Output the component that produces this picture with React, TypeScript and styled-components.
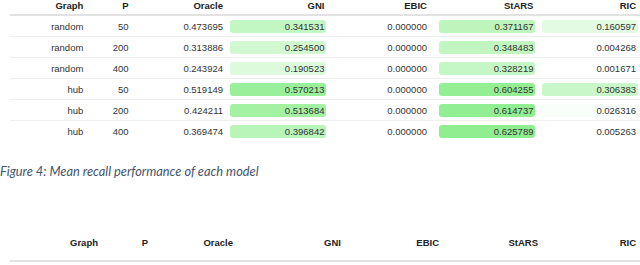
import styled, { createGlobalStyle } from 'styled-components'

const GlobalStyle = createGlobalStyle`
  html, body {
    margin: 0;
    padding: 0;
    background: #ffffff;
  }
  body {
    font-family: "Liberation Sans", Arial, sans-serif;
    overflow: hidden;
  }
`

const Page = styled.div`
  width: 640px;
  height: 265px;
  display: flex;
  flex-direction: column;
`

const Table = styled.table<{ $top: number }>`
  margin: ${(p) => p.$top}px 0 0 10px;
  border-collapse: collapse;
  table-layout: fixed;
  font-size: 9.5px;
  color: #333;
`

const Th = styled.th<{ $w: number; $pb: number }>`
  width: ${(p) => p.$w}px;
  text-align: right;
  font-weight: bold;
  color: #222;
  line-height: 10px;
  padding: 0 4px ${(p) => p.$pb}px 0;
  border-bottom: 2px solid #e2e2e2;
  box-sizing: border-box;
`

const Row = styled.tr`
  border-bottom: 1px solid #eeeeee;

  &:last-child {
    border-bottom: none;
  }
`

const Td = styled.td`
  text-align: right;
  line-height: 13px;
  padding: 4px 4px 3px 0;
  white-space: nowrap;
`

const BarTd = styled.td`
  text-align: right;
  line-height: 13px;
  padding: 4px 2px 3px 0;
`

const Bar = styled.span`
  display: inline-block;
  width: 96px;
  height: 13px;
  border-radius: 3px;
  padding-right: 2px;
  box-sizing: border-box;
  vertical-align: top;
`

const Caption = styled.p`
  margin: 22px 0 0 0;
  font-family: Lato, "Open Sans", sans-serif;
  font-style: italic;
  font-size: 12.8px;
  line-height: 16px;
  color: #44546a;
`

type Result = {
  graph: string
  p: number
  oracle: string
  gni: string
  ebic: string
  stars: string
  ric: string
}

const results: Result[] = [
  { graph: 'random', p: 50, oracle: '0.473695', gni: '0.341531', ebic: '0.000000', stars: '0.371167', ric: '0.160597' },
  { graph: 'random', p: 200, oracle: '0.313886', gni: '0.254500', ebic: '0.000000', stars: '0.348483', ric: '0.004268' },
  { graph: 'random', p: 400, oracle: '0.243924', gni: '0.190523', ebic: '0.000000', stars: '0.328219', ric: '0.001671' },
  { graph: 'hub', p: 50, oracle: '0.519149', gni: '0.570213', ebic: '0.000000', stars: '0.604255', ric: '0.306383' },
  { graph: 'hub', p: 200, oracle: '0.424211', gni: '0.513684', ebic: '0.000000', stars: '0.614737', ric: '0.026316' },
  { graph: 'hub', p: 400, oracle: '0.369474', gni: '0.396842', ebic: '0.000000', stars: '0.625789', ric: '0.005263' },
]

const headers = ['Graph', 'P', 'Oracle', 'GNI', 'EBIC', 'StARS', 'RIC']
const topWidths = [77, 45, 94, 101, 102, 106, 102]
const bottomWidths = [92, 50, 85, 108, 98, 99, 98]

const MAX = 0.625789

// white -> lightgreen, scaled on the table's largest score
function shade(v: string) {
  const t = Math.min(1, Number(v) / MAX)
  const mix = (a: number) => Math.round(255 + (a - 255) * t)
  return `rgb(${mix(144)}, ${mix(238)}, ${mix(144)})`
}

function Header({ widths, pb }: { widths: number[]; pb: number }) {
  return (
    <thead>
      <tr>
        {headers.map((h, i) => (
          <Th key={h} $w={widths[i]} $pb={pb}>
            {h}
          </Th>
        ))}
      </tr>
    </thead>
  )
}

function Score({ value }: { value: string }) {
  return (
    <BarTd>
      <Bar style={{ background: shade(value) }}>{value}</Bar>
    </BarTd>
  )
}

export default function App() {
  return (
    <Page>
      <GlobalStyle />
      <Table $top={1}>
        <Header widths={topWidths} pb={3} />
        <tbody>
          {results.map((r, i) => (
            <Row key={i}>
              <Td>{r.graph}</Td>
              <Td>{r.p}</Td>
              <Td>{r.oracle}</Td>
              <Score value={r.gni} />
              <Score value={r.ebic} />
              <Score value={r.stars} />
              <Score value={r.ric} />
            </Row>
          ))}
        </tbody>
      </Table>
      <Caption>Figure 4: Mean recall performance of each model</Caption>
      <Table $top={59}>
        <Header widths={bottomWidths} pb={12} />
      </Table>
    </Page>
  )
}
